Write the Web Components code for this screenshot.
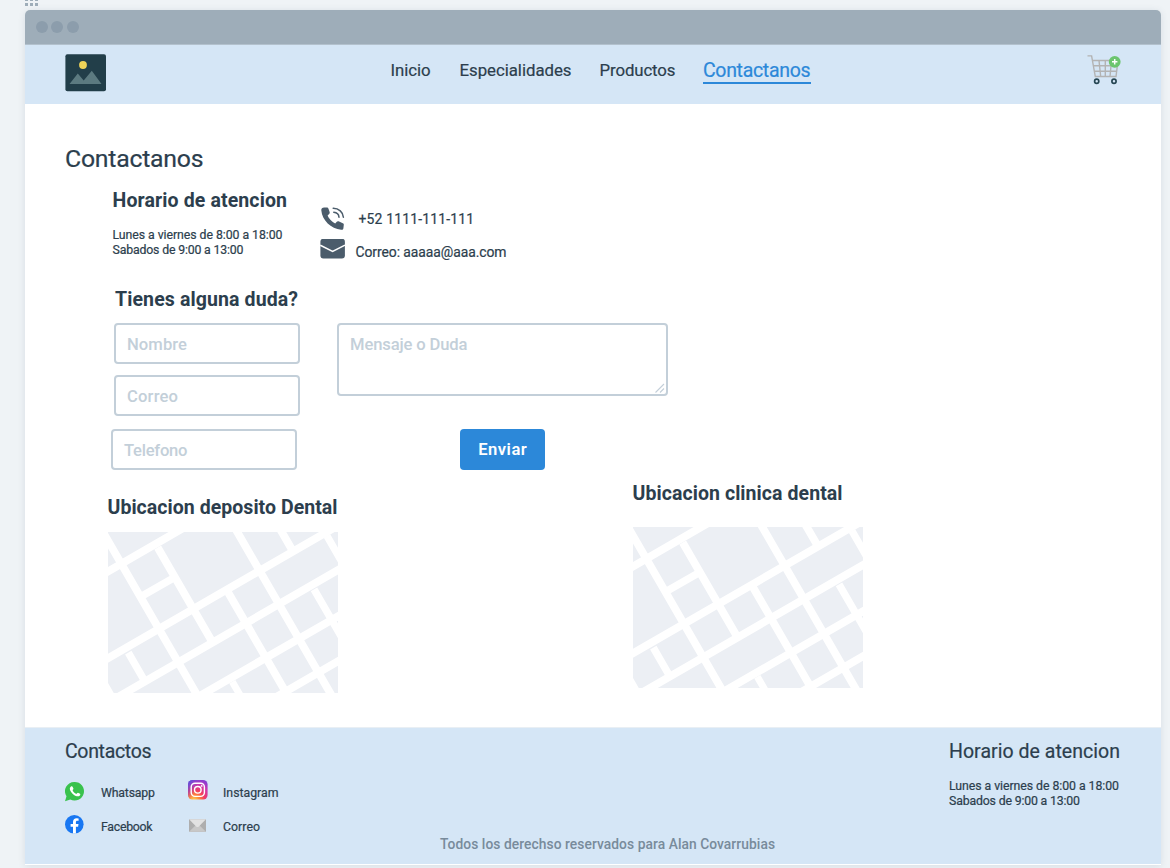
<!DOCTYPE html>
<html lang="es">
<head>
<meta charset="utf-8">
<title>Contactanos</title>
<style>
html,body{margin:0;height:868px;overflow:hidden;background:#eff3f6;font-family:Roboto,"Liberation Sans",sans-serif;color:#2c3e4d}
</style>
</head>
<body>
<contact-page></contact-page>
<script>
const define = (name, html, extra) => customElements.define(name, class extends HTMLElement {
  connectedCallback() {
    if (!this.shadowRoot) {
      const t = document.createElement('template');
      t.innerHTML = html;
      this.attachShadow({mode: 'open'}).append(t.content.cloneNode(true));
    }
    if (extra) extra(this);
  }
});

/* One line of text: s = font size, wt = weight, lh = line height, w = set width reached by tracking */
define('ui-text', `<style>:host{display:block;white-space:nowrap}:host([wt="400"]){-webkit-text-stroke:.2px currentColor}span{display:inline-block;vertical-align:top}</style><span><slot></slot></span>`, el => {
  const a = n => el.getAttribute(n);
  el.style.fontSize = a('s') + 'px';
  el.style.fontWeight = a('wt') || 400;
  el.style.lineHeight = (a('lh') || 20) + 'px';
  const w = +a('w');
  el.style.width = w + 'px';
  const span = el.shadowRoot.querySelector('span');
  const n = el.textContent.length;
  el.style.letterSpacing = ((w - span.getBoundingClientRect().width) / (n - 1)).toFixed(3) + 'px';
});

define('title-bar', `<style>
:host{display:flex;align-items:center;gap:3.4px;height:34px;box-sizing:border-box;padding-left:11.5px;background:#9eadb9;border-radius:5px 5px 0 0;margin-left:-.5px}
i{width:12px;height:12px;border-radius:50%;background:#8c9dac}
</style><i></i><i></i><i></i>`);

define('nav-bar', `<style>
:host{display:flex;height:60px;background:#d5e6f6;border-top:1px solid #b3c1cd;padding:0 40px;box-sizing:border-box;align-items:flex-start}
.logo{margin:9px 0 0 0;width:41px;height:38px}
nav{display:flex;margin:15px 0 0 284.5px}
nav ui-text{margin-right:28px}
nav ui-text:first-child{margin-right:29px}
nav .on{color:#2c88d9;border-bottom:2px solid #2c88d9;margin:1px 0 0 -.5px;height:21px}
.cart{margin:9px 0 0 auto;width:34px;height:32px}
svg{display:block}
</style>
<svg class="logo" viewBox="0 0 41 38"><rect x=".4" y=".3" width="40.6" height="37" rx="2" fill="#223e49"/><circle cx="18" cy="11" r="3.9" fill="#efd358"/><path d="M4.5 30L12.8 19.5 18.7 26.5 26.8 16.7 36.5 30z" fill="#5c7a80"/></svg>
<nav>
<ui-text s="16.8" wt="400" w="40" lh="21">Inicio</ui-text>
<ui-text s="16.8" wt="400" w="112" lh="21">Especialidades</ui-text>
<ui-text s="16.8" wt="400" w="76" lh="21">Productos</ui-text>
<ui-text class="on" s="19.5" wt="400" w="107.5" lh="20">Contactanos</ui-text>
</nav>
<svg class="cart" viewBox="0 0 34 32" fill="none"><g stroke="#b3b3b3" stroke-width="1.4"><path d="M.5 1.9H4.6L8.3 22.5H29L31 6.5H5.5M6.5 11.7H30M7.4 17.2H30M12 6.5L13.7 22.5M18.3 6.5V22.5M24.5 6.5L23 22.5"/></g><g stroke="#264653" stroke-width="1.7" fill="#d5e6f6"><circle cx="9.7" cy="27.2" r="2.1"/><circle cx="27" cy="27.2" r="2.1"/></g><circle cx="27.7" cy="7.8" r="5.9" fill="#6cc56e"/><path d="M27.7 5.1v5.4M25 7.8h5.4" stroke="#fff" stroke-width="1.5"/></svg>`);

define('hours-block', `<style>
:host{display:flex;flex-direction:column;gap:15px}
</style><slot></slot><div><ui-text s="12.3" wt="400" w="170" lh="15">Lunes a viernes de 8:00 a 18:00</ui-text><ui-text s="12.3" wt="400" w="131" lh="15">Sabados de 9:00 a 13:00</ui-text></div>`);

define('contact-lines', `<style>
:host{display:grid;grid-template-rows:33px 33px}
div{display:flex;align-items:flex-start}svg{display:block;width:26px;height:26px}
ui-text{margin-top:3px}.p{margin-left:12.5px}.m{margin-left:9.5px}
</style>
<div><svg viewBox="0 0 26 26"><path fill="#4b5c6b" d="M1.3 4.2C1.1 2.5 2.3 1.4 4.2 1.4H6.8C7.7 1.4 8.1 1.8 8.4 2.6L9.7 6.3C9.9 7.1 9.7 7.6 9.1 8.1L7.6 9.4C8.6 12.2 12.1 15.8 15.2 17.4L16.8 15.7C17.3 15.1 17.9 15 18.6 15.3L22.8 17.2C23.5 17.5 23.9 18 23.8 18.8L23.4 22.3C23.2 23.6 22.4 24 21.2 23.8C11 22.5 2.1 14.4 1.3 4.2Z"/><g fill="none" stroke="#4b5c6b" stroke-width="1.5" stroke-linecap="round"><path d="M13.2 2.2C18.8 2.2 23.1 6.3 23.4 11.2M13.8 6.3C16.7 6.6 18.8 8.4 19 11.2"/></g></svg><ui-text class="p" s="13.9" wt="400" w="115.5" lh="20">+52 1111-111-111</ui-text></div>
<div><svg viewBox="0 0 26 26"><rect x=".4" y="-.3" width="24.5" height="19.7" rx="3" fill="#4b5c6b"/><path d="M.3 6.2L12.6 12.4 25 6.2" stroke="#fff" stroke-width="1.5" fill="none"/></svg><ui-text class="m" s="13.9" wt="400" w="151" lh="20">Correo: aaaaa@aaa.com</ui-text></div>`);

define('form-field', `<style>
:host{display:block;position:relative;box-sizing:border-box;width:186.5px;height:40.5px;border:2px solid #c3cfd9;border-radius:4px;padding:9.5px 11px 0 11.5px;color:#c3cfd9;background:#fff}
:host([area]){width:331.5px;height:73px}
svg{display:none}:host([area]) svg{display:block;position:absolute;right:1.5px;bottom:1.5px}
</style><slot></slot><svg width="10" height="10" viewBox="0 0 10 10"><path d="M.5 9.5L9 1M5 9.5L9 5.5" stroke="#c3cfd9" stroke-width="1.1"/></svg>`);

define('primary-button', `<style>
:host{display:flex;justify-content:center;align-items:center;box-sizing:border-box;width:85px;height:40.5px;padding-top:2px;border-radius:4px;background:#2c88d9;color:#fff}
</style><slot></slot>`);

define('street-map', `<style>:host{display:block;width:230px;height:161px}svg{display:block}</style>
<svg width="230" height="161" viewBox="0 0 230 161"><rect width="230" height="161" fill="#eceff4"/><g fill="none" stroke="#fff" stroke-width="7.8">
<path d="M-10 45.2L85-9.6M-10 132L240-12.2M0 170.8L240 32.3M80 170.7L240 78.4M157 171.5L240 123.5"/>
<path d="M-10.8-10L94 171.5M123.5-10L228 171M49.7 15.5L103.3 108.3M120.3 60.7L184 171M168-10L184.5 18.5"/>
<path d="M35.3 63.3L65.5 46M20.3 120.7L37 149.7M206 57.3L240 116.2M219 4L236 33.5" stroke-width="7.4"/><path d="M124.3 149.7L136 170M-3 152.8L6 168.4" stroke-width="7"/></g></svg>`);

define('page-main', `<style>
:host{display:block;height:623px;box-sizing:border-box;padding:39px 0 0 40px;background:#fff}
section{display:flex;align-items:flex-start}
.info{margin:15px 0 0 47.5px}.info contact-lines{margin:17px 0 0 33px}
.ask{margin:16px 0 0 50px}
.form{margin:11px 0 0 48.5px}
.fields{display:flex;flex-direction:column;gap:11.5px}
.fields :last-child{margin:2px 0 0 -3px}
.fields ui-text{margin:0!important}
.msg{margin-left:36.5px;display:flex;flex-direction:column;gap:33px}
.msg primary-button{margin-left:123.5px}
.maps{margin:12.5px 0 0 43px}
.maps ui-text{margin-left:-.5px}
.maps div+div{margin-left:295px}
.maps div{width:230px}
.maps div:first-child{padding-top:14px}
.maps street-map{margin-top:12px}.maps div+div street-map{margin-top:21px}
</style>
<ui-text s="24.8" wt="400" w="138.5" lh="31">Contactanos</ui-text>
<section class="info"><hours-block><ui-text s="19.5" wt="700" w="174.5" lh="24">Horario de atencion</ui-text></hours-block><contact-lines></contact-lines></section>
<section class="ask"><ui-text s="19.5" wt="700" w="183" lh="24">Tienes alguna duda?</ui-text></section>
<section class="form">
<div class="fields"><form-field><ui-text s="16.6" wt="500" w="60">Nombre</ui-text></form-field><form-field><ui-text s="16.6" wt="500" w="51">Correo</ui-text></form-field><form-field><ui-text s="16.6" wt="500" w="63.5">Telefono</ui-text></form-field></div>
<div class="msg"><form-field area><ui-text s="16.6" wt="500" w="117.5">Mensaje o Duda</ui-text></form-field><primary-button><ui-text s="16.6" wt="600" w="48.5">Enviar</ui-text></primary-button></div>
</section>
<section class="maps">
<div><ui-text s="19.5" wt="700" w="230" lh="24">Ubicacion deposito Dental</ui-text><street-map></street-map></div>
<div><ui-text s="19.5" wt="700" w="210" lh="24">Ubicacion clinica dental</ui-text><street-map></street-map></div>
</section>`);

define('page-footer', `<style>
:host{display:grid;grid-template-columns:375px 1fr 171px;height:138px;box-sizing:border-box;padding:12px 41px 0 40px;background:#d5e6f6;border-top:1px solid #e9eff4;border-bottom:1.5px solid #fff}
.links{display:grid;grid-template-columns:36px 86.5px 35.5px auto;grid-template-rows:34px 34px;margin-top:15.5px;align-items:start}
svg{display:block}.links ui-text{margin-top:3px}
.rights{align-self:end;margin-bottom:10px;color:#788b9b}
hours-block{gap:15px}
</style>
<div><ui-text s="19.5" wt="400" w="86.5" lh="24">Contactos</ui-text>
<div class="links">
<svg width="20" height="22" viewBox="0 0 20 22"><path d="M9.7 1.9a9.3 9.3 0 1 1-4.4 17.5L0 21.2l1.5-5A9.3 9.3 0 0 1 9.7 1.9z" fill="#39c24d"/><path d="M5.9 6.6c.6-.6 1.3-.6 1.7.2l.8 1.8c.2.6-.6 1.2-.8 1.7.7 1.7 2 2.9 3.8 3.6.6-.2 1-1.3 1.6-1.1l2 1c.6.5.3 1.5-.4 2-1.4 1.1-3.9.4-5.9-1.1-2.4-1.8-4-4.2-3.9-6.1.1-.8.5-1.5 1.1-2z" fill="#fff"/></svg><ui-text s="12.3" wt="400" w="54">Whatsapp</ui-text>
<svg width="20" height="22" viewBox="0 0 20 22"><defs><radialGradient id="g" cx=".3" cy="1.05" r="1.1"><stop offset="0" stop-color="#ffd95a"/><stop offset=".25" stop-color="#ff8a35"/><stop offset=".5" stop-color="#f23c62"/><stop offset=".8" stop-color="#c835b5"/><stop offset="1" stop-color="#8b3dd0"/></radialGradient><linearGradient id="b" x1="0" y1="0" x2=".55" y2=".4"><stop offset="0" stop-color="#3f5ce0"/><stop offset="1" stop-color="#9b3bd0" stop-opacity="0"/></linearGradient></defs><rect y="0" width="19.6" height="19.6" rx="4.5" fill="url(#g)"/><rect y="0" width="19.6" height="19.6" rx="4.5" fill="url(#b)"/><g fill="none" stroke="#fff" stroke-width="1.4"><rect x="3.2" y="3.2" width="13.2" height="13.2" rx="3.8"/><circle cx="9.8" cy="9.8" r="3.3"/></g><circle cx="13.7" cy="5.9" r=".9" fill="#fff"/></svg><ui-text s="12.3" wt="400" w="55.5">Instagram</ui-text>
<svg width="20" height="22" viewBox="0 0 20 22"><circle cx="9.3" cy="10.3" r="9.3" fill="#1877f2"/><path d="M8 19.5V12.8H5.6V10.1H8V8C8 5.6 9.4 4.2 11.6 4.2L13.6 4.4V6.700H12.4C11.2 6.700 10.9 7.400 10.9 8.200V10.1H13.5L13.1 12.8H10.9V19.5A9.3 9.3 0 0 1 8 19.5z" fill="#fff"/></svg><ui-text s="12.3" wt="400" w="51.5">Facebook</ui-text>
<svg width="20" height="22" viewBox="0 0 20 22"><rect x="1" y="5.2" width="17" height="12.6" fill="#aeaeae"/><path d="M1 17.8L9.5 9.4 18 17.8z" fill="#c8c8c8"/><path d="M1 5.2H18L10.8 12.5Q9.5 13.7 8.2 12.5z" fill="#e2e2e2"/></svg><ui-text s="12.3" wt="400" w="37">Correo</ui-text>
</div></div>
<ui-text class="rights" s="13.8" wt="500" w="335" lh="20">Todos los derechso reservados para Alan Covarrubias</ui-text>
<hours-block><ui-text s="19.5" wt="400" w="171" lh="24">Horario de atencion</ui-text></hours-block>`);

define('contact-page', `<style>
:host{display:block;width:1170px;height:868px;overflow:hidden}
.grip{height:10px;margin-left:25px}.grip svg{display:block}
.window{margin-left:25px;width:1136px;box-shadow:0 1px 7px rgba(60,85,105,.13);border-radius:5px 5px 0 0}
</style>
<div class="grip"><svg width="14" height="7" fill="#9eadb9"><path d="M0 0h3v1H0zM5 0h3v1H5zM10 0h3v1h-3zM0 3h3v3H0zM5 3h3v3H5zM10 3h3v3h-3z"/></svg></div>
<div class="window"><title-bar></title-bar><nav-bar></nav-bar><page-main></page-main><page-footer></page-footer></div>`);
</script>
</body>
</html>
